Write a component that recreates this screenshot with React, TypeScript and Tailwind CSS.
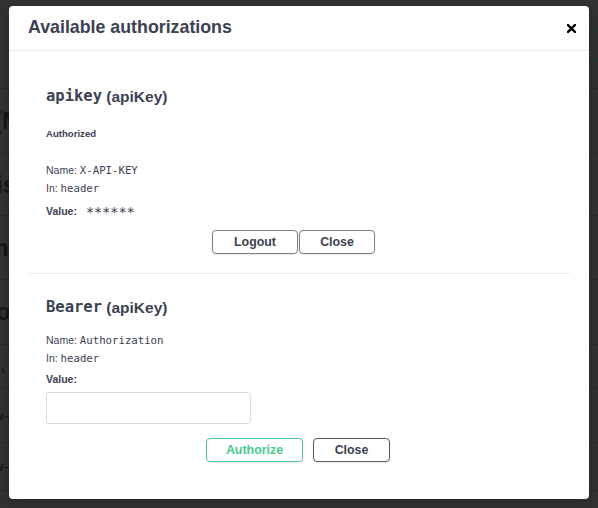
export default function App() {
  const rows = [
    { h: "h-[65px]", text: "(M", cls: "text-[24px] -ml-[6px]" },
    { h: "h-[62px]", text: "is", cls: "text-[24px] -ml-[4px]" },
    { h: "h-[64px]", text: "ns", cls: "text-[24px] -ml-[6px]" },
    { h: "h-[65px]", text: "o", cls: "text-[24px] -ml-[4px]" },
    { h: "h-[44px]", text: ",", cls: "text-[14px] ml-[1px]" },
    { h: "h-[54px]", text: "v—", cls: "text-[12px] -ml-[3px]" },
    { h: "h-[48px]", text: "v—", cls: "text-[12px] -ml-[3px]" },
  ];

  return (
    <div className="relative h-[508px] w-[598px] overflow-hidden bg-[#323232] font-['Liberation_Sans',Arial,sans-serif] text-[#3b4151]">
      {/* page content, dimmed behind the dialog */}
      <div className="flex flex-col">
        <div className="flex h-[89px] items-start justify-end border-b border-[#292929] pt-[29px]">
          <div className="-mr-[80px] h-[32px] w-[90px] rounded-[4px] border-2 border-[#1f3a2d]" />
        </div>
        {rows.map((r, i) => (
          <div
            key={i}
            className={`flex items-center overflow-hidden border-b border-[#292929] ${r.h}`}
          >
            <span className={`whitespace-nowrap font-bold text-[#161616] ${r.cls}`}>{r.text}</span>
          </div>
        ))}
      </div>

      {/* authorization dialog */}
      <div className="absolute left-[9px] top-[6px] h-[493px] w-[580px] rounded-[4px] bg-white shadow-[0_4px_12px_rgba(0,0,0,0.2)]">
        <div className="flex h-[45px] items-center justify-between border-b border-[#ebebeb] pb-[1px] pl-[19px] pr-[13px]">
          <h3 className="text-[17.8px] font-bold leading-none text-[#3b4151]">Available authorizations</h3>
          <svg width="9" height="9" viewBox="0 0 9 9" className="mt-[1px]">
            <path d="M1 1L8 8M8 1L1 8" stroke="#000" strokeWidth="2.4" strokeLinecap="square" />
          </svg>
        </div>

        <div className="px-[19px] pt-[19px]">
          {/* apiKey scheme, already authorized */}
          <div className="border-b border-[#ebebeb] px-[18px] pb-[19px] pt-[17px]">
            <h4 className="flex h-[20px] items-center text-[15.5px] font-bold leading-none">
              <code className="font-['DejaVu_Sans_Mono',monospace]">apikey</code>
              <span>&nbsp;(apiKey)</span>
            </h4>
            <h6 className="mt-[21px] text-[9.6px] font-bold leading-[12px]">Authorized</h6>
            <div className="mt-[22px] flex h-[18px] items-center text-[10.5px]">
              <span>Name:&nbsp;</span>
              <code className="font-['DejaVu_Sans_Mono',monospace] text-[10.7px]">X-API-KEY</code>
            </div>
            <div className="flex h-[18px] items-center text-[10.5px]">
              <span>In:&nbsp;</span>
              <code className="font-['DejaVu_Sans_Mono',monospace] text-[10.7px]">header</code>
            </div>
            <div className="mt-[5px] flex h-[18px] items-center text-[10.5px]">
              <span className="font-bold">Value:</span>
              <code className="ml-[9px] font-['DejaVu_Sans_Mono',monospace] text-[13.5px] text-[#3b4151]">******</code>
            </div>
            <div className="mt-[9px] flex justify-center gap-[1px]">
              <button className="h-[24px] w-[86px] rounded-[4px] border-[1.75px] border-[#808080] bg-white text-[12.4px] font-bold text-[#3b4151] shadow-[0_1px_2px_rgba(0,0,0,0.1)]">
                Logout
              </button>
              <button className="mr-[11px] h-[24px] w-[76px] rounded-[4px] border-[1.75px] border-[#808080] bg-white text-[12.4px] font-bold text-[#3b4151] shadow-[0_1px_2px_rgba(0,0,0,0.1)]">
                Close
              </button>
            </div>
          </div>

          {/* bearer scheme, waiting for a value */}
          <div className="px-[18px] pt-[24px]">
            <h4 className="flex h-[20px] items-center text-[15.5px] font-bold leading-none">
              <code className="font-['DejaVu_Sans_Mono',monospace]">Bearer</code>
              <span>&nbsp;(apiKey)</span>
            </h4>
            <div className="mt-[14px] flex h-[18px] items-center text-[10.5px]">
              <span>Name:&nbsp;</span>
              <code className="font-['DejaVu_Sans_Mono',monospace] text-[10.7px]">Authorization</code>
            </div>
            <div className="flex h-[18px] items-center text-[10.5px]">
              <span>In:&nbsp;</span>
              <code className="font-['DejaVu_Sans_Mono',monospace] text-[10.7px]">header</code>
            </div>
            <div className="mt-[3px] flex h-[18px] items-center text-[10.5px]">
              <span className="font-bold">Value:</span>
            </div>
            <input
              type="text"
              className="mt-[3px] block h-[32px] w-[205px] rounded-[4px] border border-[#d9d9d9] bg-white px-[9px] text-[12px] outline-none"
            />
            <div className="mt-[14px] flex justify-center gap-[10px] pr-[2px]">
              <button className="h-[24px] w-[97px] rounded-[4px] border-[1.75px] border-[#49cc90] bg-white text-[12.4px] font-bold text-[#49cc90] shadow-[0_1px_2px_rgba(0,0,0,0.1)]">
                Authorize
              </button>
              <button className="h-[24px] w-[77px] rounded-[4px] border-[1.75px] border-[#5a5a5a] bg-white text-[12.4px] font-bold text-[#3b4151] shadow-[0_1px_2px_rgba(0,0,0,0.1)]">
                Close
              </button>
            </div>
          </div>
        </div>
      </div>
    </div>
  );
}
